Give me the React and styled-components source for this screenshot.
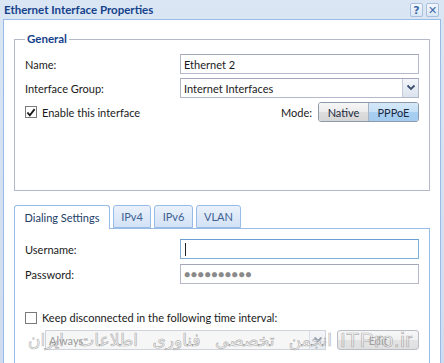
import React from "react";
import styled, { createGlobalStyle } from "styled-components";

const Global = createGlobalStyle`
  html, body { margin: 0; padding: 0; background: #d3e0f1; }
  body { font-family: Lato, "Open Sans", sans-serif; font-size: 11px; color: #1a1a1a; overflow: hidden; }
  * { box-sizing: border-box; }
`;

const Window = styled.div`
  width: 444px;
  height: 363px;
  display: flex;
  flex-direction: column;
  background: linear-gradient(#dbe6f4, #cfdcef);
  position: relative;
  overflow: hidden;
`;

const TitleBar = styled.div`
  height: 19px;
  flex: none;
  display: flex;
  align-items: center;
  justify-content: space-between;
  padding: 0 5px 0 4px;
`;

const Title = styled.div`
  font-weight: 700;
  font-size: 11.5px;
  color: #15428b;
`;

const TitleTools = styled.div`
  display: flex;
  gap: 3px;
  margin-top: 1px;
`;

const ToolButton = styled.div`
  width: 13px;
  height: 14px;
  border: 1px solid #a9bfdb;
  border-radius: 2px;
  background: linear-gradient(#f4f8fd, #d9e6f6);
  display: flex;
  align-items: center;
  justify-content: center;
  color: #3f6aa8;
  font-weight: 700;
  font-size: 11px;
  font-family: "DejaVu Sans", sans-serif;
`;

const Body = styled.div`
  flex: 1;
  margin: 0 3px;
  background: #fff;
  border: 1px solid #99bbe8;
  border-bottom: none;
  padding: 11px 10px 0;
  display: flex;
  flex-direction: column;
`;

const Group = styled.fieldset`
  margin: 0;
  padding: 7px 10px 0;
  border: 1px solid #b5b8c8;
  height: 160px;
  display: flex;
  flex-direction: column;
  gap: 4px;
`;

const Legend = styled.legend`
  padding: 0 2px;
  font-weight: 700;
  font-size: 11.5px;
  color: #15428b;
  line-height: 16px;
`;

const FormRow = styled.div`
  display: grid;
  grid-template-columns: 155px 1fr;
  align-items: center;
  height: 20px;
`;

const Label = styled.label`
  color: #1a1a1a;
`;

const TextInput = styled.div`
  height: 20px;
  border: 1px solid ${p => (p.$focus ? "#7eadd9" : "#b5b8c8")};
  border-top-color: ${p => (p.$focus ? "#6a9fd4" : "#a3a7b8")};
  background: ${p => (p.$disabled ? "#f6f6f6" : "#fff")};
  padding: 0 3px;
  display: flex;
  align-items: center;
  color: ${p => (p.$disabled ? "#9a9a9a" : "#1a1a1a")};
  position: relative;
`;

const Caret = styled.span`
  width: 1px;
  height: 13px;
  background: #222;
  margin-left: 1px;
`;

const Dots = styled.span`
  color: #8a8a8a;
  letter-spacing: 0.5px;
  font-size: 10.5px;
`;

const SelectBox = styled(TextInput)`
  padding-right: 0;
  justify-content: space-between;
`;

const SelectArrow = styled.span`
  width: 16px;
  height: 18px;
  border-left: 1px solid #c5cbd8;
  background: linear-gradient(#f3f6fb, #dbe3ee);
  display: flex;
  align-items: center;
  justify-content: center;
  opacity: ${p => (p.$disabled ? 0.5 : 1)};
`;

const CheckRow = styled.div`
  display: flex;
  align-items: center;
  justify-content: space-between;
  height: 20px;
`;

const CheckLabel = styled.label`
  display: flex;
  align-items: center;
  gap: 5px;
`;

const Box = styled.span`
  width: 12px;
  height: 12px;
  border: 1px solid #7a7a7a;
  background: #fff;
  display: flex;
  align-items: center;
  justify-content: center;
`;

const ModeWrap = styled.div`
  display: flex;
  align-items: center;
  gap: 6px;
`;

const Segmented = styled.div`
  display: flex;
  height: 20px;
  border: 1px solid #8d9aab;
  border-radius: 3px;
  overflow: hidden;
`;

const Seg = styled.div`
  width: ${p => p.$w}px;
  display: flex;
  align-items: center;
  justify-content: center;
  color: #1b2a40;
  background: ${p =>
    p.$active
      ? "linear-gradient(#d5e8f8 0%, #c5e0f7 50%, #a8cff2 50%, #a3cbef 100%)"
      : "linear-gradient(#f6f6f6 0%, #ececec 50%, #dddddd 50%, #d6d6d6 100%)"};
  & + & {
    border-left: 1px solid #a9b4c2;
  }
`;

const Tabs = styled.div`
  margin-top: 14px;
  display: flex;
  flex-direction: column;
  flex: 1;
`;

const TabStrip = styled.div`
  display: flex;
  gap: 3px;
  height: 24px;
  margin-bottom: -1px;
  position: relative;
  z-index: 1;
`;

const Tab = styled.div`
  width: ${p => p.$w}px;
  height: ${p => (p.$active ? 24 : 23)}px;
  border: 1px solid #99bbe8;
  border-bottom: ${p => (p.$active ? "none" : "1px solid #99bbe8")};
  border-radius: 3px 3px 0 0;
  background: ${p => (p.$active ? "#fff" : "linear-gradient(#eaf1fb, #d3e2f6)")};
  color: ${p => (p.$active ? "#223c66" : "#3d5f92")};
  display: flex;
  align-items: center;
  justify-content: center;
`;

const Panel = styled.div`
  flex: 1;
  border: 1px solid #99bbe8;
  border-bottom: none;
  padding: 10px 10px 0;
  display: flex;
  flex-direction: column;
  gap: 5px;
`;

const Spacer = styled.div`
  height: ${p => p.$h}px;
`;

const IntervalRow = styled.div`
  display: flex;
  align-items: center;
  gap: 11px;
  padding-left: 20px;
  margin-top: 1px;
`;

const DisabledSelect = styled(SelectBox)`
  width: 282px;
  border-color: #cfd3dc;
`;

const Btn = styled.div`
  width: 82px;
  height: 20px;
  border: 1px solid #b9bec6;
  border-radius: 3px;
  background: linear-gradient(#f7f7f7 0%, #f0f0f0 50%, #e4e4e4 50%, #e0e0e0 100%);
  color: #a0a0a0;
  display: flex;
  align-items: center;
  justify-content: center;
`;

const Watermark = styled.div`
  position: absolute;
  left: 34px;
  top: 328px;
  width: 390px;
  display: flex;
  align-items: center;
  gap: 8px;
  pointer-events: none;
  font-family: "DejaVu Sans", "Noto Sans", sans-serif;
  color: rgba(255, 255, 255, 0.4);
  -webkit-text-stroke: 0.7px rgba(130, 130, 130, 0.6);
  white-space: nowrap;
`;

const WmFa = styled.span`
  direction: rtl;
  width: 298px;
  text-align: center;
  font-size: 17px;
  word-spacing: 9px;
`;

const WmLatin = styled.span`
  font-family: "Liberation Sans", sans-serif;
  font-size: 21px;
  letter-spacing: 0.5px;
`;

const Chevron = () => (
  <svg width="10" height="8" viewBox="0 0 10 8">
    <path d="M1.5 1.5 L5 5 L8.5 1.5" fill="none" stroke="#3c4f6e" strokeWidth="1.8" />
  </svg>
);

const Tick = () => (
  <svg width="11" height="11" viewBox="0 0 11 11">
    <path d="M1.5 5.5 L4.2 8.5 L9.5 1.8" fill="none" stroke="#1a1a1a" strokeWidth="2" />
  </svg>
);

export default function App() {
  return (
    <Window>
      <Global />
      <TitleBar>
        <Title>Ethernet Interface Properties</Title>
        <TitleTools>
          <ToolButton>?</ToolButton>
          <ToolButton>✕</ToolButton>
        </TitleTools>
      </TitleBar>
      <Body>
        <Group>
          <Legend>General</Legend>
          <FormRow>
            <Label>Name:</Label>
            <TextInput>Ethernet 2</TextInput>
          </FormRow>
          <FormRow>
            <Label>Interface Group:</Label>
            <SelectBox>
              Internet Interfaces
              <SelectArrow>
                <Chevron />
              </SelectArrow>
            </SelectBox>
          </FormRow>
          <CheckRow>
            <CheckLabel>
              <Box>
                <Tick />
              </Box>
              Enable this interface
            </CheckLabel>
            <ModeWrap>
              Mode:
              <Segmented>
                <Seg $w={49}>Native</Seg>
                <Seg $w={50} $active>
                  PPPoE
                </Seg>
              </Segmented>
            </ModeWrap>
          </CheckRow>
        </Group>
        <Tabs>
          <TabStrip>
            <Tab $w={96} $active>
              Dialing Settings
            </Tab>
            <Tab $w={38}>IPv4</Tab>
            <Tab $w={39}>IPv6</Tab>
            <Tab $w={45}>VLAN</Tab>
          </TabStrip>
          <Panel>
            <FormRow>
              <Label>Username:</Label>
              <TextInput $focus>
                <Caret />
              </TextInput>
            </FormRow>
            <FormRow>
              <Label>Password:</Label>
              <TextInput>
                <Dots>●●●●●●●●●●</Dots>
              </TextInput>
            </FormRow>
            <Spacer $h={17} />
            <CheckLabel>
              <Box />
              Keep disconnected in the following time interval:
            </CheckLabel>
            <IntervalRow>
              <DisabledSelect $disabled>
                Always
                <SelectArrow $disabled>
                  <Chevron />
                </SelectArrow>
              </DisabledSelect>
              <Btn>Edit</Btn>
            </IntervalRow>
          </Panel>
        </Tabs>
      </Body>
      <Watermark>
        <WmFa>انجمن تخصصی فناوری اطلاعات ایران</WmFa>
        <WmLatin>ITPro.ir</WmLatin>
      </Watermark>
    </Window>
  );
}
